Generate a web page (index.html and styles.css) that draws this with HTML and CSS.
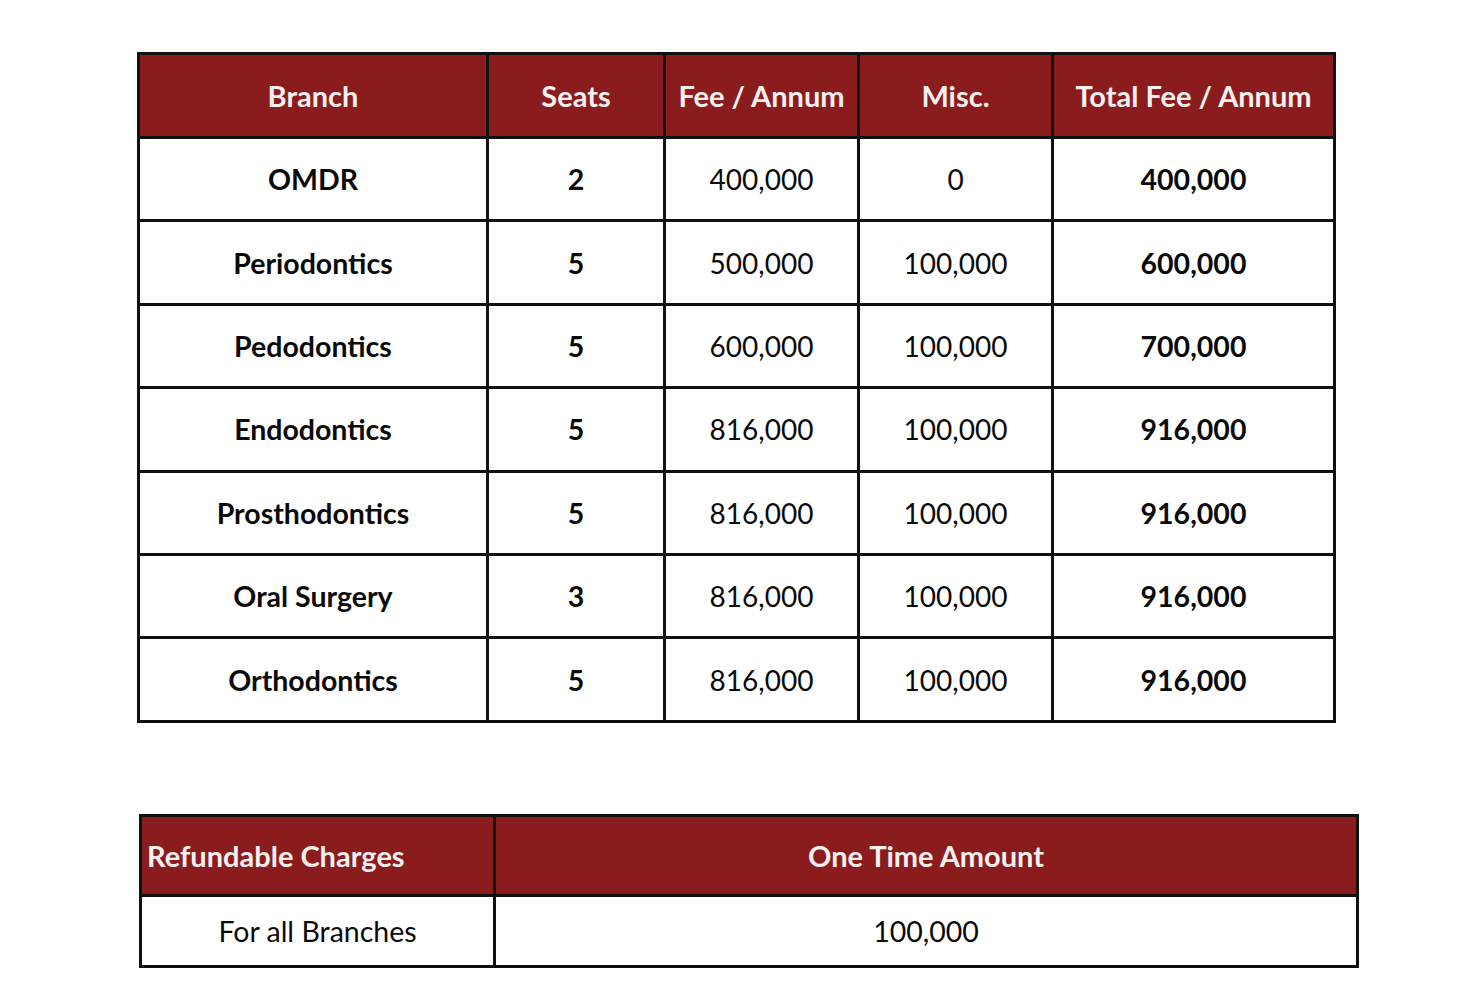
FILE: index.html
```html
<!DOCTYPE html>
<html>
<head>
<meta charset="utf-8">
<link rel="stylesheet" href="styles.css">
</head>
<body>
<div class="page">
  <table class="fees">
    <colgroup>
      <col class="c1"><col class="c2"><col class="c3"><col class="c4"><col class="c5">
    </colgroup>
    <thead>
      <tr><th>Branch</th><th>Seats</th><th>Fee / Annum</th><th>Misc.</th><th>Total Fee / Annum</th></tr>
    </thead>
    <tbody>
      <tr><td class="b">OMDR</td><td class="b">2</td><td>400,000</td><td>0</td><td class="b">400,000</td></tr>
      <tr><td class="b">Periodontics</td><td class="b">5</td><td>500,000</td><td>100,000</td><td class="b">600,000</td></tr>
      <tr><td class="b">Pedodontics</td><td class="b">5</td><td>600,000</td><td>100,000</td><td class="b">700,000</td></tr>
      <tr><td class="b">Endodontics</td><td class="b">5</td><td>816,000</td><td>100,000</td><td class="b">916,000</td></tr>
      <tr><td class="b">Prosthodontics</td><td class="b">5</td><td>816,000</td><td>100,000</td><td class="b">916,000</td></tr>
      <tr><td class="b">Oral Surgery</td><td class="b">3</td><td>816,000</td><td>100,000</td><td class="b">916,000</td></tr>
      <tr><td class="b">Orthodontics</td><td class="b">5</td><td>816,000</td><td>100,000</td><td class="b">916,000</td></tr>
    </tbody>
  </table>

  <table class="refund">
    <colgroup><col class="r1"><col class="r2"></colgroup>
    <thead>
      <tr><th class="left">Refundable Charges</th><th>One Time Amount</th></tr>
    </thead>
    <tbody>
      <tr><td>For all Branches</td><td>100,000</td></tr>
    </tbody>
  </table>
</div>
</body>
</html>
```
FILE: styles.css
```css
html, body {
  margin: 0;
  padding: 0;
  background: #ffffff;
}
.page {
  font-family: "Lato", "Open Sans", sans-serif;
  color: #0a0a0a;
  display: flex;
  flex-direction: column;
  align-items: flex-start;
  padding-top: 52px;
}
table {
  border-collapse: collapse;
  table-layout: fixed;
}
.fees {
  margin-left: 137px;
  width: 1196px;
  border: 3px solid #111;
}
.c1 { width: 349px; }
.c2 { width: 177px; }
.c3 { width: 194px; }
.c4 { width: 194px; }
.c5 { width: 282px; }
th, td {
  border: 3px solid #111;
  text-align: center;
  padding: 0;
}
th {
  background: #8b1c1e;
  color: #f5f0f0;
  font-weight: 700;
  font-size: 29px;
}
.fees th { height: 81px; }
.fees td {
  height: 80.4px;
  font-size: 28px;
  font-weight: 400;
}
.fees td.b { font-weight: 700; font-size: 28.5px; }
.refund {
  margin-top: 91px;
  margin-left: 139px;
  width: 1217px;
  border: 3px solid #111;
}
.r1 { width: 354px; }
.r2 { width: 863px; }
.refund th { height: 77px; }
.refund th.left { text-align: left; padding-left: 5px; }
.refund td {
  height: 68px;
  font-size: 28.5px;
}
```
